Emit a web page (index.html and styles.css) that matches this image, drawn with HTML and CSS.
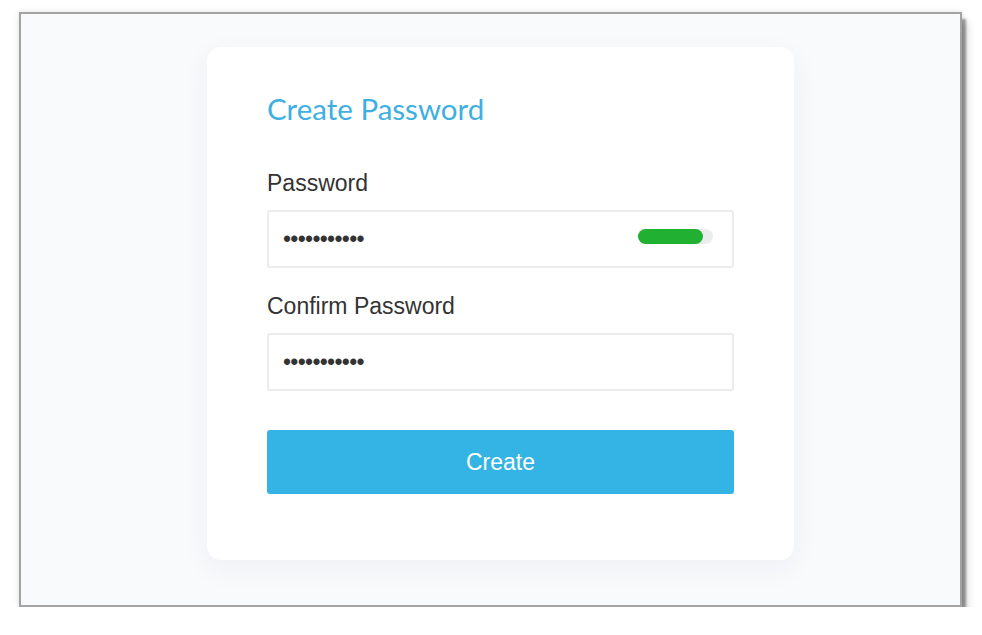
FILE: index.html
```html
<!DOCTYPE html>
<html lang="en">
<head>
  <meta charset="UTF-8">
  <meta name="viewport" content="width=device-width, initial-scale=1.0">
  <title>Create Password</title>
  <link rel="stylesheet" href="styles.css">
</head>
<body>
  <div class="window">
    <div class="card">
      <h1>Create Password</h1>

      <label for="password">Password</label>
      <div class="field">
        <input type="password" id="password" value="abcdefghijk">
        <div class="strength"><div class="strength-fill" style="width: 87%"></div></div>
      </div>

      <label for="confirm">Confirm Password</label>
      <div class="field">
        <input type="password" id="confirm" value="abcdefghijk">
      </div>

      <button type="button">Create</button>
    </div>
  </div>
</body>
</html>
```

FILE: styles.css
```css
body {
  margin: 0;
  padding: 12px 0 0 19px;
  background: #fff;
  font-family: 'Liberation Sans', Arial, sans-serif;
}

.window {
  box-sizing: border-box;
  width: 943px;
  height: 595px;
  border: 2px solid #a3a3a3;
  background: #f9fafc;
  box-shadow: 4px 7px 2px rgba(0,0,0,0.33), 5px 9px 8px rgba(0,0,0,0.18), 0 0 6px rgba(0,0,0,0.12);
  padding: 33px 0 0 186px;
}

.card {
  box-sizing: border-box;
  width: 587px;
  height: 513px;
  background: #fff;
  border-radius: 14px;
  box-shadow: 0 8px 30px rgba(20,30,60,0.05);
  padding: 42px 60px 0 60px;
}

h1 {
  margin: 0 0 41px 0;
  font-family: 'Lato', sans-serif;
  font-weight: normal;
  font-size: 29.5px;
  line-height: 40px;
  color: #3eafe0;
}

label {
  display: block;
  font-size: 23px;
  line-height: 27px;
  color: #333;
  margin-bottom: 13px;
}

.field {
  box-sizing: border-box;
  display: flex;
  align-items: center;
  height: 58px;
  border: 2px solid #ebebeb;
  border-radius: 3px;
  padding: 0 19px 0 14px;
  margin-bottom: 25px;
}

.field input {
  flex: 1;
  min-width: 0;
  border: none;
  outline: none;
  padding: 0;
  font-family: 'Liberation Sans', Arial, sans-serif;
  font-size: 23px;
  letter-spacing: -0.7px;
  color: #333;
  background: transparent;
}

.strength {
  width: 75px;
  height: 15px;
  border-radius: 8px;
  background: #ececec;
  margin-top: -5px;
}

.strength-fill {
  height: 100%;
  border-radius: 8px;
  background: #22b033;
}

button {
  display: block;
  width: 100%;
  height: 64px;
  margin-top: 39px;
  border: none;
  border-radius: 3px;
  background: #33b4e4;
  color: #fff;
  font-family: 'Liberation Sans', Arial, sans-serif;
  font-size: 23px;
  cursor: pointer;
}
```
